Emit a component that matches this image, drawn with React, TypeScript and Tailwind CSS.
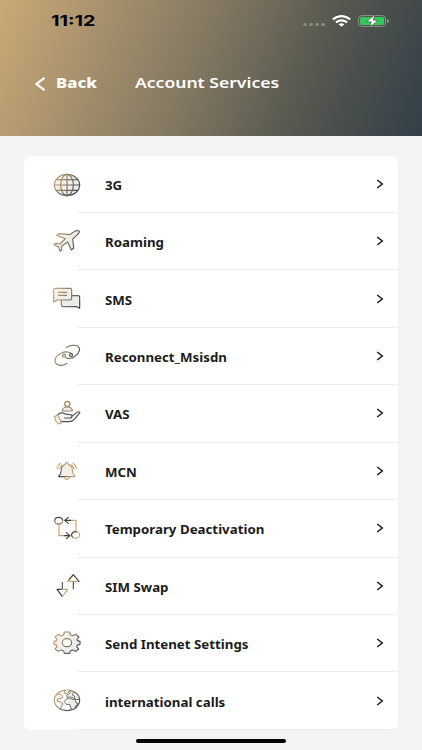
import type { ReactNode } from "react";

interface ServiceRowProps {
  readonly label: string;
  readonly icon: ReactNode;
}

const services: ServiceRowProps[] = [
  { label: "3G", icon: <GlobeIcon /> },
  { label: "Roaming", icon: <PlaneIcon /> },
  { label: "SMS", icon: <MessagesIcon /> },
  { label: "Reconnect_Msisdn", icon: <LinkIcon /> },
  { label: "VAS", icon: <HandIcon /> },
  { label: "MCN", icon: <BellIcon /> },
  { label: "Temporary Deactivation", icon: <ExchangeIcon /> },
  { label: "SIM Swap", icon: <SwapIcon /> },
  { label: "Send Intenet Settings", icon: <GearIcon /> },
  { label: "international calls", icon: <EarthIcon /> },
];

function ServiceIcon({ children }: { readonly children: ReactNode }) {
  return (
    <svg
      viewBox="0 0 90 90"
      className="mb-px size-[30px] shrink-0"
      fill="none"
      stroke="url(#line)"
      strokeWidth={3.4}
      strokeLinecap="round"
      strokeLinejoin="round"
    >
      {children}
    </svg>
  );
}

// Shared gradients, in the 90x90 space of the service icons
function Gradients() {
  return (
    <svg className="absolute size-0" aria-hidden="true">
      <defs>
        <linearGradient id="line" gradientUnits="userSpaceOnUse" x1="6" y1="20" x2="84" y2="66">
          <stop offset="0" stopColor="#c9a878" />
          <stop offset="0.55" stopColor="#7d7464" />
          <stop offset="1" stopColor="#36424a" />
        </linearGradient>
        <linearGradient id="tint" gradientUnits="userSpaceOnUse" x1="6" y1="20" x2="84" y2="66">
          <stop offset="0" stopColor="#f8f1e8" />
          <stop offset="1" stopColor="#e9ebec" />
        </linearGradient>
        <linearGradient id="duo" gradientUnits="userSpaceOnUse" x1="22" y1="60" x2="66" y2="30">
          <stop offset="0" stopColor="#2f3d50" />
          <stop offset="0.5" stopColor="#b59a76" />
          <stop offset="1" stopColor="#c9a878" />
        </linearGradient>
      </defs>
    </svg>
  );
}

function GlobeIcon() {
  return (
    <ServiceIcon>
      <ellipse cx="45" cy="48" rx="38" ry="32" fill="url(#tint)" />
      <ellipse cx="45" cy="48" rx="19" ry="32" />
      <path d="M45 16v64M7 48h76M13 32h64M13 64h64" />
    </ServiceIcon>
  );
}

function PlaneIcon() {
  return (
    <ServiceIcon>
      <path
        fill="url(#tint)"
        d="M82 15q-8-3-17 3L53 26 20 23l-6 5 26 10-16 16-14-2-4 4 14 7 4 13 5-3v-12l18-13 11 24 7-6-3-27 12-11q9-8 8-13Z"
      />
    </ServiceIcon>
  );
}

function MessagesIcon() {
  return (
    <ServiceIcon>
      <path fill="url(#tint)" d="M50 35h28q5 0 5 5v33l-9-5H35q-7 0-7-6V47" />
      <path fill="url(#tint)" d="M9 13h45q5 0 5 5v25q0 5-5 5H15l-10 6V18q0-5 4-5Z" />
      <path d="M19 25h25M19 34h25" />
    </ServiceIcon>
  );
}

function LinkIcon() {
  return (
    <ServiceIcon>
      <path d="M43 20C52 13 70 10 78 16c9 7 4 20-8 29-9 7-20 9-28 5" />
      <path d="M61 41C57 32 40 30 28 36 13 43 4 57 12 67c7 9 24 7 33 0" />
      <circle cx="36" cy="44" r="4.5" />
      <circle cx="57" cy="42" r="4.5" stroke="#4b4c47" />
    </ServiceIcon>
  );
}

function HandIcon() {
  return (
    <ServiceIcon>
      <circle cx="46" cy="18" r="8" fill="url(#tint)" stroke="#9c8866" />
      <path d="M31 39q0-12 15-12t15 12Z" fill="url(#tint)" stroke="#9c8866" />
      <path
        fill="#f2f2f2"
        stroke="#50545a"
        d="M16 51q7-8 18-6 5 4 14 4 12 0 12 5l15-11q7-4 9 1L67 64q-6 7-16 7H26"
      />
      <path d="M38 60h16q6 0 6-6" stroke="#50545a" />
      <path d="M7 57l10-7 12 24-9 4q-11-9-13-21Z" fill="url(#tint)" stroke="#bea17a" />
    </ServiceIcon>
  );
}

function BellIcon() {
  return (
    <ServiceIcon>
      <g transform="translate(2.5 3)">
        <path
          fill="#f2efeb"
          stroke="url(#duo)"
          d="M18 59v-3q7-4 7-14 0-16 12-19 0-6 5-6t5 6q12 3 12 19 0 10 7 14v3Z"
        />
        <path stroke="#c3a274" d="M34 60q1 7 8 7t8-7M13 35q1-10 10-16M21 36q1-7 7-12M63 36q-1-7-7-12M71 35q-1-10-10-16" />
      </g>
    </ServiceIcon>
  );
}

function ExchangeIcon() {
  return (
    <ServiceIcon>
      <path stroke="#c3a274" d="M21 34v34h21M72 55V22H52" />
      <path stroke="#3c3c3c" d="M56 22H39m10-9-11 9 11 9M38 68h15M43 59l11 9-11 9" />
      <ellipse cx="20" cy="23" rx="12" ry="10" stroke="#3f4447" />
      <path stroke="#c9a878" d="M8 24a12 10 0 0 0 24 0" />
      <ellipse cx="71" cy="66" rx="12" ry="10" stroke="#c9a878" />
      <path stroke="#3f4447" d="M61 72a12 10 0 0 1 11-16" />
    </ServiceIcon>
  );
}

function SwapIcon() {
  return (
    <ServiceIcon>
      <path stroke="#4a4c4c" strokeLinecap="butt" d="M31 33v22M64 32v23" />
      <path stroke="#c9a878" d="M64 11 47 31h34" />
      <path stroke="#454746" d="M51 26 64 11l17 20" />
      <path stroke="#353b42" d="M31 55H15l16 22" />
      <path stroke="#c9a878" d="M29 55h18L31 77" />
    </ServiceIcon>
  );
}

function GearIcon() {
  return (
    <ServiceIcon>
      <path
        fill="url(#tint)"
        d="M37 12h16l2 8 7 3 10-4 9 8-6 7 1 4 8 2v9l-8 2-2 5 6 7-9 7-10-4-6 3-2 7H37l-2-7-7-3-10 4-9-7 6-7-2-5-7-2v-9l7-2 2-4-6-7 9-8 10 4 7-3Z"
      />
      <ellipse cx="45" cy="44" rx="14" ry="12" fill="#fff" />
    </ServiceIcon>
  );
}

function EarthIcon() {
  return (
    <ServiceIcon>
      <ellipse cx="45" cy="43" rx="38" ry="31" />
      <path fill="url(#tint)" strokeWidth={3} d="M14 24l12 1 7 7-6 5-10 2-2 6 11 3 7 6-5 8-3 9" />
      <path fill="url(#tint)" strokeWidth={3} d="M40 13l-4 7 6 4 9-5 1-6M58 15l-5 8-9 5 1 6 11-1 8 3" />
      <path
        fill="url(#tint)"
        strokeWidth={3}
        d="M43 39l10-3 7 4 9 1 4 10 6 1-8 8-3 8-8 3-5-8-1-7-11-1-6-7ZM64 20l-3 7 8 5-3 5 8 4 8-1"
      />
    </ServiceIcon>
  );
}

function ServiceRow({ label, icon }: ServiceRowProps) {
  return (
    <li className="relative flex h-[57.45px] items-center pl-[28px] after:absolute after:right-0 after:bottom-0 after:left-[53px] after:h-px after:bg-[#ececec]">
      {icon}
      <span className="mt-[3px] ml-[22.5px] flex-1 origin-left scale-x-[1.155] text-[11.5px] leading-[18px] font-bold whitespace-nowrap text-[#1c1c1c]">
        {label}
      </span>
      <svg viewBox="0 0 8 10" className="mr-[14px] mb-px h-[10px] w-[8px]" fill="none" stroke="#1c1c1c" strokeWidth={1.5}>
        <path d="M1.2 1 6.3 5 1.2 9" />
      </svg>
    </li>
  );
}

function StatusBar() {
  return (
    <div className="flex h-[42px] items-center justify-between pr-[32px] pl-[51px]">
      <span className="origin-left scale-x-[1.36] font-['Inter'] text-[14.5px] leading-none font-bold text-black">
        11:12
      </span>
      <div className="flex items-center">
        <div className="mt-[7px] flex gap-[2.4px]">
          <i className="h-[3px] w-[3.6px] rounded-full bg-[#8b897f]" />
          <i className="h-[3px] w-[3.6px] rounded-full bg-[#8b897f]" />
          <i className="h-[3px] w-[3.6px] rounded-full bg-[#8b897f]" />
          <i className="h-[3px] w-[3.6px] rounded-full bg-[#8b897f]" />
        </div>
        <svg viewBox="0 0 19 12" className="ml-[7px] h-[12px] w-[19px]" fill="none" stroke="#fff" strokeWidth={2.2}>
          <path d="M.8 4.3Q9.5-2.1 18.2 4.3M3.9 7.3q5.6-4 11.2 0" />
          <path d="M6.6 9.2q2.9-2 5.8 0L9.5 11.7Z" fill="#fff" stroke="none" />
        </svg>
        <svg viewBox="0 0 32 14" className="ml-[7px] h-[14px] w-[32px]">
          <rect x="0.6" y="1.6" width="27" height="10.8" rx="3.4" fill="none" stroke="#8d9390" strokeWidth="1" />
          <rect x="2" y="3" width="24.2" height="8" rx="2" fill="#34c759" />
          <path d="M29 5q2 .4 2 2t-2 2Z" fill="#8d9390" />
          <path d="M16.6.8 8.4 7.8h4.8L11.8 13.2 20 6.2h-4.8Z" fill="#fff" stroke="#4f5550" strokeWidth=".7" />
        </svg>
      </div>
    </div>
  );
}

export default function App() {
  return (
    <div className="relative h-[750px] w-[422px] overflow-hidden bg-[#f4f4f4] font-['Noto_Sans',sans-serif]">
      <Gradients />
      <header className="h-[136px] bg-linear-[112deg,#caa977_0%,#807661_48%,#56574f_72%,#323f48_100%]">
        <StatusBar />
        <div className="flex h-[82px] items-center pl-[35px] text-white">
          <svg viewBox="0 0 10 14" className="mt-px h-[14px] w-[10px]" fill="none" stroke="#fff" strokeWidth={2.2} strokeLinecap="round">
            <path d="M8.8 1.3 1.5 7l7.3 5.7" />
          </svg>
          <span className="mt-px ml-[11px] w-[79px] origin-left scale-x-[1.24] text-[13.5px] font-extrabold">Back</span>
          <h1 className="origin-left scale-x-[1.21] text-[14.5px] font-semibold whitespace-nowrap">
            Account Services
          </h1>
        </div>
      </header>
      <main className="px-6 pt-[19.5px]">
        <ul className="overflow-hidden rounded-[7px] bg-white">
          {services.map((service) => (
            <ServiceRow key={service.label} {...service} />
          ))}
        </ul>
      </main>
      <div className="absolute bottom-[7px] left-[136px] h-[4px] w-[150px] rounded-full bg-black" />
    </div>
  );
}
